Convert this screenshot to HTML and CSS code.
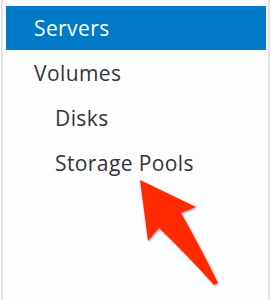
FILE: index.html
```html
<!DOCTYPE html>
<html lang="en">
<head>
<meta charset="UTF-8">
<title>Storage nav</title>
<link rel="stylesheet" href="styles.css">
</head>
<body>
<div class="panel">
  <ul class="nav">
    <li class="nav-item active">Servers</li>
    <li class="nav-item">Volumes</li>
    <li class="nav-item sub">Disks</li>
    <li class="nav-item sub">Storage Pools</li>
  </ul>

  <!-- callout arrow pointing at Storage Pools -->
  <svg class="arrow" width="271" height="300" viewBox="0 0 271 300">
    <defs>
      <filter id="shade" x="-20%" y="-20%" width="140%" height="140%">
        <feDropShadow dx="1" dy="1" stdDeviation="1.2" flood-color="#000" flood-opacity="0.35"/>
      </filter>
    </defs>
    <path d="M140 180 L196 207 L181 213 Q202 250 218 283 L214 285 Q190 258 159 228 L148 241 Z" fill="#ff2a00" filter="url(#shade)"/>
  </svg>
</div>
</body>
</html>
```

FILE: styles.css
```css
body {
  margin: 0;
  background: #fdfcfe;
  font-family: 'Open Sans', 'Noto Sans', sans-serif;
}
.panel {
  position: relative;
  height: 300px;
  box-sizing: border-box;
  border-left: 2px solid #e3e3e6;
  border-right: 2px solid #e3e3e6;
  margin: 0 1px;
  padding: 6px 2px 0 3px;
}
.nav {
  list-style: none;
  margin: 0;
  padding: 0;
}
.nav-item {
  height: 45px;
  line-height: 46px;
  padding-left: 28px;
  font-size: 21px;
  letter-spacing: 0.4px;
  color: #353535;
}
.nav-item.active {
  height: 44px;
  line-height: 45px;
  background: #0079c6;
  color: #fff;
}
.nav-item.sub {
  padding-left: 49px;
}
.arrow {
  position: absolute;
  top: 0;
  left: -3px;
}
```
